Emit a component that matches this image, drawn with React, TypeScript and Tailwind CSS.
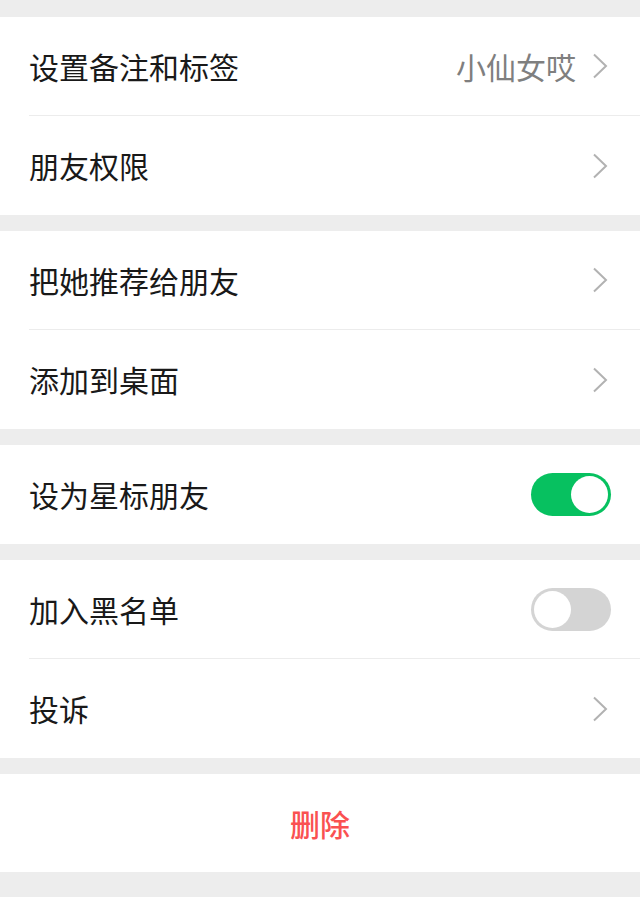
import { useState } from 'react';

const font = { fontFamily: '"Noto Sans CJK SC", "Noto Sans", sans-serif' };

function Chevron() {
  return (
    <svg width="16" height="26" viewBox="0 0 16 26" className="shrink-0 mr-[3px]">
      <path d="M2 1.5 L14 13 L2 24.5" fill="none" stroke="#b2b2b2" strokeWidth="2" />
    </svg>
  );
}

function Toggle({ on, onClick }: { on: boolean; onClick: () => void }) {
  return (
    <button
      onClick={onClick}
      className={`relative w-[80px] h-[43px] rounded-full shrink-0 transition-colors ${
        on ? 'bg-[#07c160]' : 'bg-[#d4d4d4]'
      }`}
    >
      <span
        className={`absolute top-[3px] w-[37px] h-[37px] rounded-full bg-white transition-all ${
          on ? 'left-[40px]' : 'left-[3px]'
        }`}
      />
    </button>
  );
}

function Row({
  label,
  value,
  right,
  divider,
}: {
  label: string;
  value?: string;
  right?: React.ReactNode;
  divider?: boolean;
}) {
  return (
    <div className="pl-[29px]">
      <div
        className={`h-[99px] flex items-center pr-[29px] ${
          divider ? 'border-b border-[#ececec]' : ''
        }`}
      >
        <span className="flex-1 text-[30px] text-[#191919]">{label}</span>
        {value && <span className="text-[30px] text-[#7f7f7f] mr-[16px]">{value}</span>}
        {right ?? <Chevron />}
      </div>
    </div>
  );
}

export default function App() {
  const [starred, setStarred] = useState(true);
  const [blocked, setBlocked] = useState(false);

  return (
    <div className="min-h-[897px] bg-[#ededed] pt-[17px] flex flex-col gap-[16px]" style={font}>
      <div className="bg-white">
        <Row label="设置备注和标签" value="小仙女哎" divider />
        <Row label="朋友权限" />
      </div>
      <div className="bg-white">
        <Row label="把她推荐给朋友" divider />
        <Row label="添加到桌面" />
      </div>
      <div className="bg-white">
        <Row label="设为星标朋友" right={<Toggle on={starred} onClick={() => setStarred(!starred)} />} />
      </div>
      <div className="bg-white">
        <Row
          label="加入黑名单"
          divider
          right={<Toggle on={blocked} onClick={() => setBlocked(!blocked)} />}
        />
        <Row label="投诉" />
      </div>
      <div className="bg-white h-[98px] flex items-center justify-center">
        <span className="text-[30px] font-medium text-[#fa5151]">删除</span>
      </div>
    </div>
  );
}
